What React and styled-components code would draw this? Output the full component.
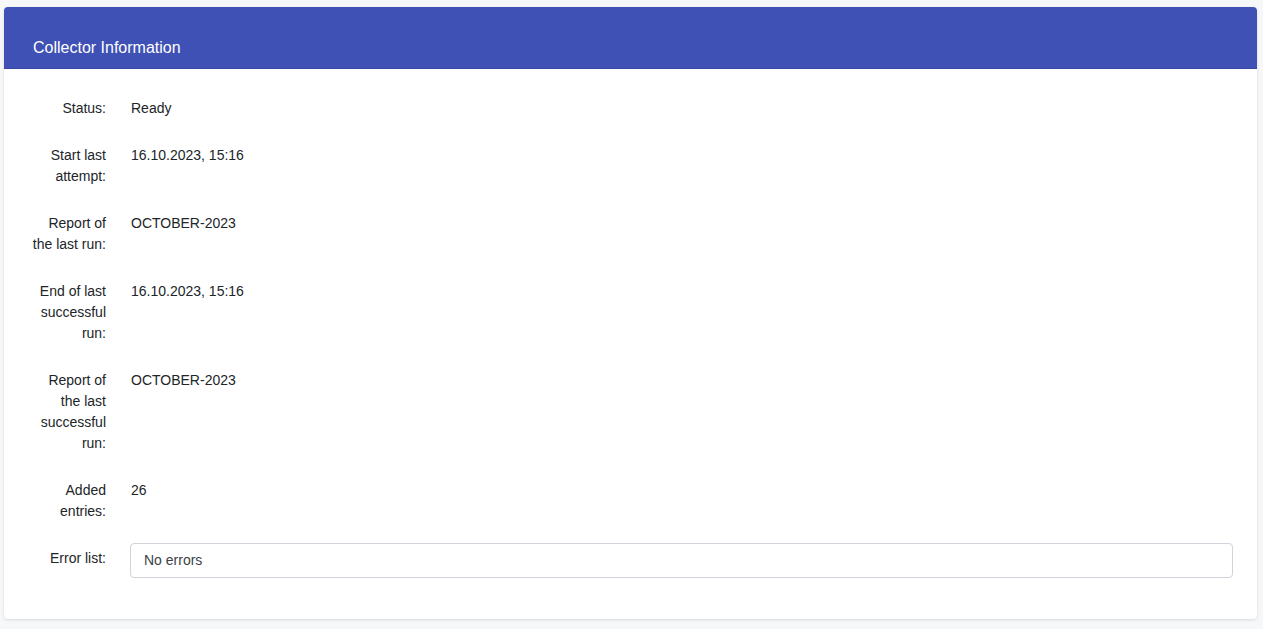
import React from 'react'
import styled, { createGlobalStyle } from 'styled-components'

const GlobalStyle = createGlobalStyle`
	body {
		margin: 0;
		background: #f6f7f9;
		font-family: "Liberation Sans", Arial, sans-serif;
		color: #212529;
	}
`

const Page = styled.div`
	padding: 7px 6px 12px 4px;
`

const Card = styled.section`
	background: #fff;
	border-radius: 4px;
	box-shadow: 0 1px 3px rgba(0, 0, 0, 0.12);
`

const Header = styled.header`
	background: #3f51b5;
	color: #fff;
	border-radius: 4px 4px 0 0;
	padding: 31px 29px 11px;
	font-size: 16px;
	line-height: 19px;
	border-bottom: 1px solid #3949a3;
`

const Body = styled.div`
	padding: 29px 24px 41px 24px;
	display: flex;
	flex-direction: column;
	gap: 26px;
`

const Row = styled.div`
	display: flex;
	align-items: flex-start;
	gap: 24px;
	margin-top: ${(p) => (p.$tight ? '-5px' : '0')};
	font-size: 14px;
	line-height: 21px;
`

const Label = styled.div`
	width: 78px;
	flex-shrink: 0;
	text-align: right;
	padding-top: ${(p) => (p.$offset ? '5px' : '0')};
`

const Value = styled.div`
	flex: 1;
	padding-left: 1px;
`

const Field = styled.div`
	flex: 1;
	height: 35px;
	box-sizing: border-box;
	border: 1px solid #ced4da;
	border-radius: 4px;
	padding: 0 13px;
	display: flex;
	align-items: center;
	color: #3c4248;
`

const rows = [
	['Status:', 'Ready'],
	['Start last attempt:', '16.10.2023, 15:16'],
	['Report of the last run:', 'OCTOBER-2023'],
	['End of last successful run:', '16.10.2023, 15:16'],
	['Report of the last successful run:', 'OCTOBER-2023'],
	['Added entries:', '26'],
]

const App = () => {
	return (
		<Page>
			<GlobalStyle />
			<Card>
				<Header>Collector Information</Header>
				<Body>
					{rows.map(([label, value]) => (
						<Row key={label}>
							<Label>{label}</Label>
							<Value>{value}</Value>
						</Row>
					))}
					<Row $tight>
						<Label $offset>Error list:</Label>
						<Field>No errors</Field>
					</Row>
				</Body>
			</Card>
		</Page>
	)
}

export default App
